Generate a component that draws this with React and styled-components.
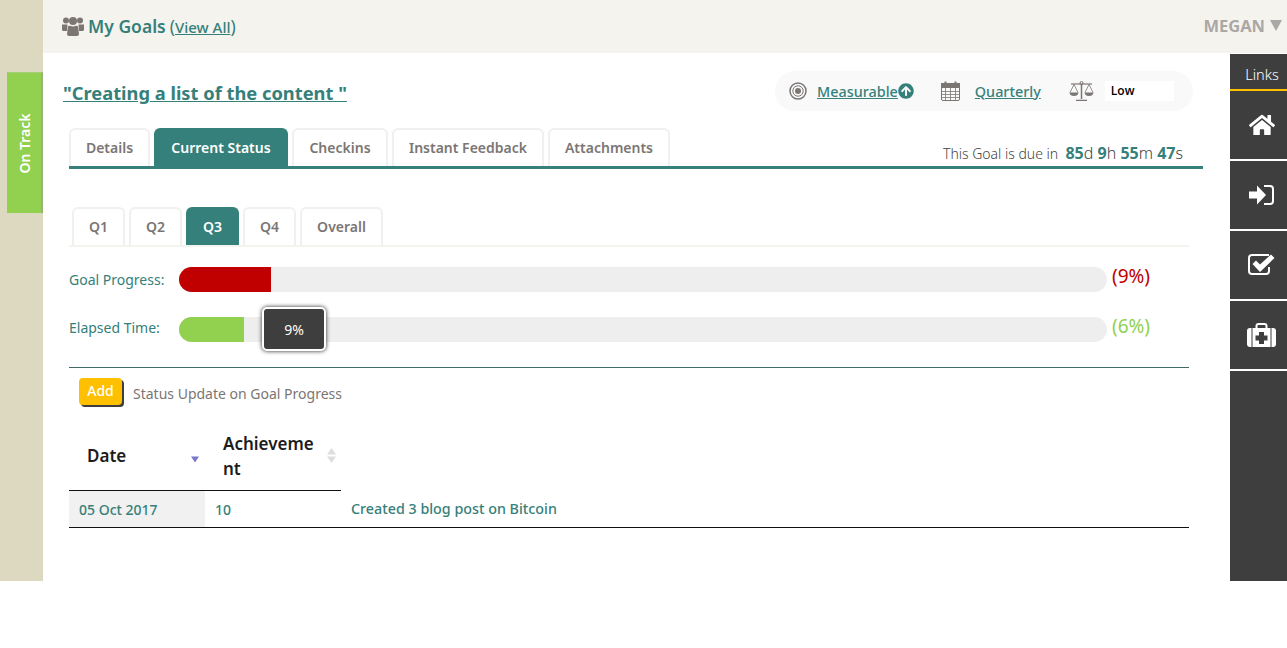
import React from 'react';
import styled, { createGlobalStyle } from 'styled-components';
import { FaHome, FaArrowCircleUp } from 'react-icons/fa';

const teal = '#35807a';
const dark = '#3e3e3e';
const grey = '#7b7674';

const GlobalStyle = createGlobalStyle`
  html, body {
    margin: 0;
    background: #fff;
    font-family: "Noto Sans", Lato, sans-serif;
  }
  * { box-sizing: border-box; }
`;

const Page = styled.div`
  display: flex;
  height: 581px;
`;

const Rail = styled.div`
  width: 43px;
  flex: none;
  background: #ddd8c0;
  padding: 72px 0 0 7px;
`;

const StatusFlag = styled.div`
  height: 141px;
  background: #92d14f;
  border-right: 2px solid #9cb078;
  border-top: 1px solid #a5cf78;
  display: flex;
  align-items: center;
  justify-content: center;
  color: #fff;
  font-size: 14px;
  font-weight: 600;
  span {
    display: block;
    white-space: nowrap;
    transform: rotate(-90deg);
  }
`;

const Main = styled.div`
  flex: 1;
  display: flex;
  flex-direction: column;
  min-width: 0;
`;

const Header = styled.header`
  height: 53px;
  flex: none;
  background: #f5f3ee;
  display: flex;
  align-items: center;
  justify-content: space-between;
  padding: 0 5px 2px 19px;
`;

const HeaderTitle = styled.div`
  display: flex;
  align-items: center;
  color: ${teal};
  font-size: 17.5px;
  font-weight: 600;
  svg { margin-right: 4px; }
`;

const ViewLink = styled.span`
  font-weight: 400;
  margin-left: 4px;
`;

const ViewAll = styled.a`
  color: ${teal};
  font-size: 15px;
  font-weight: 500;
  text-decoration: underline;
`;

const UserName = styled.div`
  display: flex;
  align-items: center;
  gap: 5px;
  color: #aaa8a6;
  font-size: 16.5px;
  font-weight: 700;
`;

const Body = styled.div`
  flex: 1;
  display: flex;
  padding-top: 1px;
  min-height: 0;
`;

const Content = styled.main`
  flex: 1;
  min-width: 0;
  padding: 17px 27px 0 26px;
`;

const TitleRow = styled.div`
  display: flex;
  align-items: center;
  justify-content: space-between;
  height: 40px;
  margin-left: -6px;
  padding-right: 10px;
`;

const GoalTitle = styled.a`
  color: ${teal};
  font-size: 18.3px;
  font-weight: 700;
  text-decoration: underline;
  padding-top: 2px;
`;

const MetaPill = styled.div`
  width: 418px;
  height: 40px;
  border-radius: 20px;
  background: #f9f9f9;
  display: flex;
  align-items: center;
  padding-left: 14px;
`;

const MetaIcon = styled.span`
  display: flex;
  color: ${grey};
  margin-right: ${(p) => p.$gap}px;
`;

const MetaLink = styled.a`
  display: flex;
  align-items: center;
  color: ${teal};
  font-size: 14.4px;
  font-weight: 500;
  text-decoration: underline;
  margin-right: ${(p) => p.$gap}px;
`;

const LowBox = styled.div`
  width: 69px;
  height: 20px;
  background: #fff;
  color: #000;
  font-family: "Open Sans", sans-serif;
  font-size: 12px;
  font-weight: 600;
  line-height: 20px;
  padding-left: 6px;
`;

const TabBar = styled.div`
  display: flex;
  align-items: flex-end;
  gap: 4px;
  height: 41px;
  margin-top: 17px;
  border-bottom: 3px solid ${teal};
`;

const Tab = styled.div`
  width: ${(p) => p.$w}px;
  height: 38px;
  display: flex;
  align-items: center;
  justify-content: center;
  padding-bottom: 2px;
  border: 2px solid ${(p) => (p.$active ? teal : '#f1f0ee')};
  border-bottom: 0;
  border-radius: 6px 6px 0 0;
  background: ${(p) => (p.$active ? teal : '#fff')};
  color: ${(p) => (p.$active ? '#fff' : grey)};
  font-size: 14px;
  font-weight: 600;
`;

const DueText = styled.div`
  margin-left: auto;
  margin-right: 20px;
  padding-bottom: 2px;
  font-size: 16px;
  font-weight: 300;
  color: #444;
  white-space: pre;
  b { color: ${teal}; font-weight: 700; }
`;

const DuePrefix = styled.span`
  font-size: 14px;
`;

const QuarterBar = styled.div`
  display: flex;
  gap: 4px;
  height: 40px;
  margin: 38px 14px 0 0;
  padding-left: 3px;
  border-bottom: 2px solid #f5f3ee;
`;

const ProgressRow = styled.div`
  display: flex;
  align-items: center;
  height: 25px;
  margin-top: ${(p) => p.$top}px;
`;

const ProgressLabel = styled.div`
  width: 110px;
  flex: none;
  color: ${teal};
  font-size: 14px;
  padding-bottom: ${(p) => p.$lift}px;
`;

const Track = styled.div`
  width: 928px;
  height: 25px;
  flex: none;
  border-radius: 13px;
  background: #eee;
  position: relative;
`;

const Fill = styled.div`
  height: 100%;
  border-radius: 13px 0 0 13px;
  background: ${(p) => p.$color};
`;

const Tip = styled.div`
  position: absolute;
  left: 83px;
  top: -10px;
  width: 64px;
  height: 44px;
  display: flex;
  align-items: center;
  justify-content: center;
  border: 2px solid #fff;
  border-radius: 5px;
  background: ${dark};
  box-shadow: 0 0 4px #222;
  color: #fff;
  font-size: 14px;
`;

const Percent = styled.div`
  margin-left: 5px;
  padding-bottom: 7px;
  color: ${(p) => p.$color};
  font-size: 19px;
`;

const Rule = styled.hr`
  margin: 25px 14px 0 0;
  border: 0;
  border-top: 1px solid #3e6b68;
`;

const AddRow = styled.div`
  display: flex;
  align-items: flex-start;
  gap: 11px;
  margin: 10px 0 0 10px;
`;

const AddText = styled.span`
  color: ${grey};
  font-size: 14px;
  line-height: 20px;
  padding-top: 6px;
`;

const AddButton = styled.button`
  width: 43px;
  height: 27px;
  border: 0;
  border-radius: 4px;
  background: #ffc000;
  box-shadow: 2px 2px 0 ${dark};
  color: #fff;
  font: inherit;
  font-size: 14px;
  font-weight: 500;
  padding: 0 0 3px;
`;

const GoalTable = styled.table`
  width: 1120px;
  margin-top: 11px;
  border-collapse: collapse;
  table-layout: fixed;
`;

const HeadCell = styled.th`
  width: ${(p) => p.$w || 'auto'};
  height: 74px;
  padding: 6px 18px 0;
  position: relative;
  border-bottom: ${(p) => (p.$w ? '1px solid #111' : '0')};
  color: #1c1c1c;
  font-size: 17px;
  line-height: 25px;
  font-weight: 600;
  text-align: left;
  word-break: break-all;
`;

const SortMark = styled.svg`
  position: absolute;
  right: ${(p) => p.$right}px;
  top: ${(p) => p.$top}px;
`;

const Cell = styled.td`
  height: 37px;
  padding: 1px 10px 0;
  background: ${(p) => (p.$shade ? '#f1f1f1' : 'transparent')};
  border-bottom: 1px solid #111;
  color: ${teal};
  font-size: ${(p) => p.$size || 14}px;
  font-weight: 500;
`;

const Sidebar = styled.aside`
  width: 57px;
  flex: none;
  background: ${dark};
`;

const SideTitle = styled.div`
  height: 37px;
  border-bottom: 2px solid #ffc000;
  color: #fff;
  font-size: 14.5px;
  font-weight: 300;
  line-height: 40px;
  text-align: center;
  padding-left: 7px;
`;

const SideItem = styled.div`
  height: 70px;
  display: flex;
  align-items: center;
  justify-content: center;
  padding-left: 6px;
  border-bottom: 2px solid #fff;
  color: #fff;
`;

const UsersIcon = () => (
  <svg width="22" height="20" viewBox="0 0 22 20" fill={grey}>
    <circle cx="4" cy="4.5" r="3" />
    <circle cx="18" cy="4.5" r="3" />
    <circle cx="11" cy="5" r="4" />
    <path d="M0 8.5h5.5L5 15H1.5Q0 15 0 13.5zM22 8.5h-5.5L17 15h3.5Q22 15 22 13.5z" />
    <path d="M6 10.5Q6.5 9.5 8 9.8Q11 11 14 9.8Q15.5 9.5 16 10.5L17 18Q17 20 15 20H7Q5 20 5 18z" />
  </svg>
);

const TargetIcon = () => (
  <svg width="18" height="18" viewBox="0 0 18 18" fill="none" stroke="currentColor">
    <circle cx="9" cy="9" r="8" strokeWidth="1.5" />
    <circle cx="9" cy="9" r="5.2" strokeWidth="1" />
    <circle cx="9" cy="9" r="3" fill="currentColor" stroke="none" />
  </svg>
);

const CalendarIcon = () => (
  <svg width="19" height="20" viewBox="0 0 19 20" fill="none" stroke="currentColor">
    <rect x="0.5" y="2.5" width="18" height="17" rx="1.5" fill="#f9f9f9" />
    <rect x="0.5" y="2.5" width="18" height="4" fill="currentColor" />
    <path d="M0.5 10.5h18M0.5 13.5h18M0.5 16.5h18M4.5 7v12M9.5 7v12M14.5 7v12" strokeWidth="0.8" />
    <path d="M4.5 0.5v4M14.5 0.5v4" strokeWidth="2" />
  </svg>
);

const ScaleIcon = () => (
  <svg width="25" height="20" viewBox="0 0 25 20" fill="none" stroke="currentColor" strokeWidth="1">
    <path d="M12.5 3v15M7 19.5h11" strokeWidth="1.5" />
    <path d="M2 3h21" strokeWidth="1.2" />
    <circle cx="12.5" cy="2" r="1.5" />
    <path d="M5 3.5L1 11.5M5 3.5L9 11.5M20 3.5L16 11.5M20 3.5L24 11.5" strokeWidth="0.8" />
    <path d="M0.5 11.5h9Q9 15 5 15T0.5 11.5zM15.5 11.5h9Q24 15 20 15T15.5 11.5z" fill="currentColor" stroke="none" />
  </svg>
);

const SignInIcon = () => (
  <svg width="25" height="20" viewBox="0 0 25 20" fill="#fff">
    <path d="M0 6.5h8V0.5L17 10 8 19.5V13.5H0z" />
    <path d="M15 0h6a4 4 0 0 1 4 4v12a4 4 0 0 1-4 4h-6v-2h6a2 2 0 0 0 2-2V4a2 2 0 0 0-2-2h-6z" />
  </svg>
);

const CheckIcon = () => (
  <svg width="27" height="22" viewBox="0 0 27 22">
    <path d="M21 13v4a3 3 0 0 1-3 3H4a3 3 0 0 1-3-3V4a3 3 0 0 1 3-3h17" fill="none" stroke="#fff" strokeWidth="2" />
    <path d="M4.5 10l3.5-3.5 4 4L23 0.5l3.5 3.5-14.5 14z" fill="#fff" />
  </svg>
);

const MedkitIcon = () => (
  <svg width="29" height="24" viewBox="0 0 29 24">
    <path d="M9.5 6V3a2 2 0 0 1 2-2h6a2 2 0 0 1 2 2v3" fill="none" stroke="#fff" strokeWidth="2" />
    <rect x="0" y="5" width="29" height="19" rx="3" fill="#fff" />
    <path d="M5 5v19M24 5v19" stroke={dark} strokeWidth="1" />
    <path d="M12 9h5v3.5h3.5v5H17V21h-5v-3.5H8.5v-5H12z" fill={dark} />
  </svg>
);

const tabs = [
  ['Details', 81],
  ['Current Status', 134, true],
  ['Checkins', 96],
  ['Instant Feedback', 152],
  ['Attachments', 122],
];

const quarters = [
  ['Q1', 53],
  ['Q2', 53],
  ['Q3', 53, true],
  ['Q4', 53],
  ['Overall', 83],
];

export default function App() {
  return (
    <>
      <GlobalStyle />
      <Page>
        <Rail>
          <StatusFlag>
            <span>On Track</span>
          </StatusFlag>
        </Rail>
        <Main>
          <Header>
            <HeaderTitle>
              <UsersIcon />
              My Goals
              <ViewLink>
                (<ViewAll>View All</ViewAll>)
              </ViewLink>
            </HeaderTitle>
            <UserName>
              MEGAN
              <svg width="12" height="11" viewBox="0 0 12 11">
                <path d="M0 0h12L6 11z" fill="#aaa8a6" />
              </svg>
            </UserName>
          </Header>
          <Body>
            <Content>
              <TitleRow>
                <GoalTitle>"Creating a list of the content "</GoalTitle>
                <MetaPill>
                  <MetaIcon $gap={10}>
                    <TargetIcon />
                  </MetaIcon>
                  <MetaLink $gap={27}>
                    Measurable
                    <FaArrowCircleUp size={16} color={teal} />
                  </MetaLink>
                  <MetaIcon $gap={15}>
                    <CalendarIcon />
                  </MetaIcon>
                  <MetaLink $gap={28}>Quarterly</MetaLink>
                  <MetaIcon $gap={11}>
                    <ScaleIcon />
                  </MetaIcon>
                  <LowBox>Low</LowBox>
                </MetaPill>
              </TitleRow>
              <TabBar>
                {tabs.map(([label, w, active]) => (
                  <Tab key={label} $w={w} $active={active}>
                    {label}
                  </Tab>
                ))}
                <DueText>
                  <DuePrefix>{'This Goal is due in  '}</DuePrefix>
                  <b>85</b>d <b>9</b>h <b>55</b>m <b>47</b>s
                </DueText>
              </TabBar>
              <QuarterBar>
                {quarters.map(([label, w, active]) => (
                  <Tab key={label} $w={w} $active={active}>
                    {label}
                  </Tab>
                ))}
              </QuarterBar>
              <ProgressRow $top={20}>
                <ProgressLabel $lift={0}>Goal Progress:</ProgressLabel>
                <Track>
                  <Fill $color="#c00000" style={{ width: '92px' }} />
                </Track>
                <Percent $color="#c00000">(9%)</Percent>
              </ProgressRow>
              <ProgressRow $top={25}>
                <ProgressLabel $lift={4}>Elapsed Time:</ProgressLabel>
                <Track>
                  <Fill $color="#92d14f" style={{ width: '65px' }} />
                  <Tip>9%</Tip>
                </Track>
                <Percent $color="#92d14f">(6%)</Percent>
              </ProgressRow>
              <Rule />
              <AddRow>
                <AddButton>Add</AddButton>
                <AddText>Status Update on Goal Progress</AddText>
              </AddRow>
              <GoalTable>
                <thead>
                  <tr>
                    <HeadCell $w="136px">
                      Date
                      <SortMark $right={6} $top={40} width="8" height="7" viewBox="0 0 9 7">
                        <path d="M0 0h9L4.5 7z" fill="#7777cc" />
                      </SortMark>
                    </HeadCell>
                    <HeadCell $w="136px">
                      Achievement
                      <SortMark $right={5} $top={32} width="9" height="15" viewBox="0 0 9 15">
                        <path d="M0 6.5h9L4.5 0zM0 8.5h9L4.5 15z" fill="#ddd" />
                      </SortMark>
                    </HeadCell>
                    <HeadCell />
                  </tr>
                </thead>
                <tbody>
                  <tr>
                    <Cell $shade>05 Oct 2017</Cell>
                    <Cell>10</Cell>
                    <Cell $size={14.3}>Created 3 blog post on Bitcoin</Cell>
                  </tr>
                </tbody>
              </GoalTable>
            </Content>
            <Sidebar>
              <SideTitle>Links</SideTitle>
              <SideItem>
                <FaHome size={26} />
              </SideItem>
              <SideItem>
                <SignInIcon />
              </SideItem>
              <SideItem>
                <CheckIcon />
              </SideItem>
              <SideItem>
                <MedkitIcon />
              </SideItem>
            </Sidebar>
          </Body>
        </Main>
      </Page>
    </>
  );
}
